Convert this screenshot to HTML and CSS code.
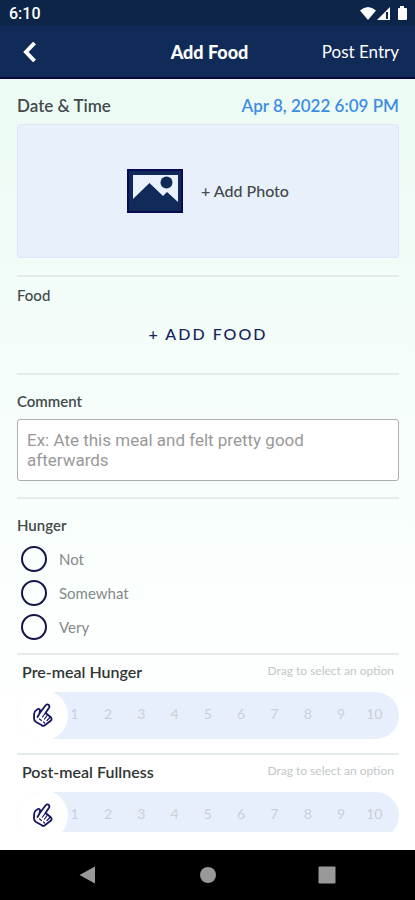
FILE: index.html
```html
<!DOCTYPE html>
<html lang="en">
<head>
<meta charset="utf-8">
<meta name="viewport" content="width=device-width, initial-scale=1">
<title>Add Food</title>
<link rel="stylesheet" href="styles.css">
</head>
<body>
<div class="screen">
  <div class="status">
    <span>6:10</span>
    <svg class="status-icons" width="48" height="16" viewBox="0 0 48 16" aria-hidden="true">
      <path d="M0 4.5Q8 -2.5 16 4.5L8 14Z" fill="#fff"/>
      <path d="M30 1V14H17Z" fill="#fff"/>
      <path d="M27 6V13" stroke="#0d2549" stroke-width="2"/>
      <path d="M40 0H44V2H46Q47 2 47 3V13Q47 14 46 14H39Q38 14 38 13V3Q38 2 39 2H40Z" fill="#fff"/>
    </svg>
  </div>
  <header class="header">
    <button class="back" type="button" aria-label="Back">
      <svg width="18" height="22" viewBox="0 0 18 22" aria-hidden="true"><path d="M14.500 2L6 11L14.500 20" fill="none" stroke="#fff" stroke-width="4"/></svg>
    </button>
    <h1 class="title">Add Food</h1>
    <button class="post" type="button">Post Entry</button>
  </header>
  <main class="main">
    <form class="form">
      <section class="section photo-section">
        <div class="date-row">
          <span>Date &amp; Time</span>
          <button class="date" type="button">Apr 8, 2022 6:09 PM</button>
        </div>
        <button class="photo" type="button">
          <svg width="56" height="44" viewBox="0 0 56 44" aria-hidden="true">
            <path d="M0 0H56V44H0Z" fill="#0b0b55"/>
            <path d="M2 2H54V42H2Z" fill="#102b58"/>
            <path d="M6 6H51V33L40 23L36 27L22.500 14L6 30Z" fill="#eaf1fd"/>
            <circle cx="39.500" cy="13.500" r="6" fill="#102b58"/>
          </svg>
          <span>+ Add Photo</span>
        </button>
      </section>
      <section class="section food-section">
        <h2 class="label">Food</h2>
        <button class="add-food" type="button">+ ADD FOOD</button>
      </section>
      <section class="section comment-section">
        <label class="label" for="comment">Comment</label>
        <textarea class="comment" id="comment" rows="2" placeholder="Ex: Ate this meal and felt pretty good afterwards"></textarea>
      </section>
      <fieldset class="section hunger-section">
        <legend class="label">Hunger</legend>
        <label class="option"><input type="radio" name="hunger"><span>Not</span></label>
        <label class="option"><input type="radio" name="hunger"><span>Somewhat</span></label>
        <label class="option"><input type="radio" name="hunger"><span>Very</span></label>
      </fieldset>
      <section class="section scale-section">
        <div class="scale-head">
          <label class="scale-label" for="pre">Pre-meal Hunger</label>
          <span class="hint">Drag to select an option</span>
        </div>
        <div class="track">
          <span>1</span><span>2</span><span>3</span><span>4</span><span>5</span><span>6</span><span>7</span><span>8</span><span>9</span><span>10</span>
          <input class="slider" id="pre" type="range" min="0" max="10" value="0">
          <svg class="hand" viewBox="0 0 20 24" aria-hidden="true"><use href="#hand"/></svg>
        </div>
      </section>
      <section class="section scale-section">
        <div class="scale-head">
          <label class="scale-label" for="post">Post-meal Fullness</label>
          <span class="hint">Drag to select an option</span>
        </div>
        <div class="track">
          <span>1</span><span>2</span><span>3</span><span>4</span><span>5</span><span>6</span><span>7</span><span>8</span><span>9</span><span>10</span>
          <input class="slider" id="post" type="range" min="0" max="10" value="0">
          <svg class="hand" viewBox="0 0 20 24" aria-hidden="true"><use href="#hand"/></svg>
        </div>
      </section>
    </form>
  </main>
  <nav class="nav" aria-label="System">
    <button type="button" aria-label="Back"><svg width="18" height="18" viewBox="0 0 18 18"><path d="M16 0.500V17.500L0.500 9Z" fill="#999"/></svg></button>
    <button type="button" aria-label="Home"><svg width="18" height="18" viewBox="0 0 18 18"><circle cx="9" cy="9" r="8" fill="#999"/></svg></button>
    <button type="button" aria-label="Recent apps"><svg width="18" height="18" viewBox="0 0 18 18"><rect x="0.500" y="0.500" width="17" height="17" rx="1" fill="#999"/></svg></button>
  </nav>
</div>
<svg class="defs" width="0" height="0" aria-hidden="true">
  <symbol id="hand" viewBox="0 0 20 24">
    <g fill="none" stroke="#14145f" stroke-linejoin="round" stroke-linecap="round">
      <path d="M6.500 10.500L12.500 2.500Q14 0.800 15.500 1.800Q17 3 16 4.800L12.500 10L14.500 11.500L18 14.500Q19.200 16 18 17.500L11.500 22.500Q10 23.500 8.500 22L3 19Q1 17.500 1 15.500L1.200 10.500Q1.500 8 3.500 7L5 6Q7 5.500 7 7.500L6.500 10.500L4.500 14" stroke-width="1.800"/>
      <path d="M12.500 10L9.500 14M14.500 12L11.500 16M17 14.500L14 17.500M6.500 16L8.500 17.500M10.500 19L11.500 20" stroke-width="1.200"/>
    </g>
  </symbol>
</svg>
</body>
</html>
```
FILE: styles.css
```css
* {
  box-sizing: border-box;
}

body {
  margin: 0;
  font-family: Lato, "Liberation Sans", sans-serif;
  font-size: 14px;
  line-height: 20px;
  color: #434a4a;
}

button {
  border: 0;
  padding: 0;
  background: none;
  font: inherit;
  color: inherit;
}

svg {
  display: block;
}

.defs {
  position: absolute;
}

.screen {
  display: flex;
  flex-direction: column;
  height: 100vh;
  background: linear-gradient(#ecfbf4 80px, #f5fdfa 380px, #fbfffd 600px, #fff 740px);
}

.status {
  display: flex;
  align-items: center;
  justify-content: space-between;
  height: 26px;
  padding: 2px 7px 0 9px;
  background: #0d2549;
  color: #fff;
  font-family: Roboto, sans-serif;
  font-size: 16px;
  font-weight: 500;
}

.header {
  display: grid;
  grid-template-columns: 1fr auto 1fr;
  align-items: center;
  height: 53px;
  padding: 0 16px 0 20px;
  background: #102b58;
  border-bottom: 2px solid #08083f;
  color: #fff;
}

.back {
  justify-self: start;
}

.title {
  margin: 0;
  font-size: 18px;
  font-weight: 900;
}

.post {
  justify-self: end;
  font-size: 17px;
}

.main {
  display: flex;
  flex: 1;
  min-height: 0;
  padding-bottom: 18px;
}

.form {
  flex: 1;
  padding: 0 16px 0 17px;
  overflow-y: auto;
  scrollbar-width: none;
}

.section {
  margin: 0;
  padding: 0;
  border: 0;
  border-bottom: 2px solid #e5ebea;
}

.photo-section {
  padding: 17px 0;
}

.date-row {
  display: flex;
  justify-content: space-between;
  padding-bottom: 8px;
  font-size: 17px;
  font-weight: 600;
}

.date {
  color: #3e8de0;
}

.photo {
  display: flex;
  align-items: center;
  justify-content: center;
  gap: 18px;
  width: 100%;
  height: 134px;
  border: 1px solid #dce7f6;
  border-radius: 4px;
  background: #e8f0fc;
  font-size: 16px;
  font-weight: 500;
}

.label {
  display: block;
  margin: 0;
  padding: 0;
  font-size: 15px;
  font-weight: 600;
}

.food-section {
  padding: 8px 0 29px;
}

.food-section .label {
  font-weight: 500;
}

.add-food {
  display: block;
  margin: 19px auto 0;
  color: #16235f;
  font-size: 16px;
  font-weight: 500;
  letter-spacing: 2px;
}

.comment-section {
  padding: 16px 0;
}

.comment {
  display: block;
  width: 100%;
  height: 62px;
  margin-top: 8px;
  padding: 10px 9px;
  border: 1px solid #aaafae;
  border-radius: 3px;
  background: #fff;
  font-family: Roboto, sans-serif;
  font-size: 17px;
  line-height: 20px;
  resize: none;
}

.comment::placeholder {
  color: #999;
}

.hunger-section {
  padding: 16px 0 9px;
}

.hunger-section .label {
  float: left;
  width: 100%;
  margin-bottom: 7px;
}

.option {
  display: flex;
  clear: both;
  align-items: center;
  gap: 12px;
  height: 34px;
  padding-left: 4px;
  color: #858989;
  font-size: 15px;
}

.option input {
  appearance: none;
  width: 26px;
  height: 26px;
  margin: 0;
  border: 2px solid #14144b;
  border-radius: 50%;
}

.option input:checked {
  background: #14144b;
}

.scale-section {
  padding: 6px 0 14px;
}

.scale-head {
  display: flex;
  justify-content: space-between;
  padding: 0 5px;
}

.scale-label {
  padding-top: 1px;
  color: #303535;
  font-size: 16px;
  font-weight: 600;
}

.hint {
  color: #c2c6c6;
  font-size: 12px;
}

.track {
  position: relative;
  display: flex;
  align-items: center;
  height: 47px;
  margin-top: 10px;
  padding: 0 8px 3px 41px;
  overflow: hidden;
  border-radius: 24px;
  background: #e8effc;
  color: #c8d0da;
}

.track span {
  flex: 1;
  text-align: center;
}

.slider {
  position: absolute;
  inset: 0;
  width: 100%;
  height: 100%;
  margin: 0;
  appearance: none;
  background: none;
}

.slider::-webkit-slider-thumb {
  appearance: none;
  width: 51px;
  height: 51px;
  border-radius: 50%;
  background: #fff;
}

.hand {
  position: absolute;
  top: 11px;
  left: 16px;
  width: 20px;
  height: 24px;
  pointer-events: none;
}

.nav {
  display: flex;
  align-items: center;
  justify-content: space-between;
  height: 50px;
  padding: 0 79px;
  background: #000;
}
```
